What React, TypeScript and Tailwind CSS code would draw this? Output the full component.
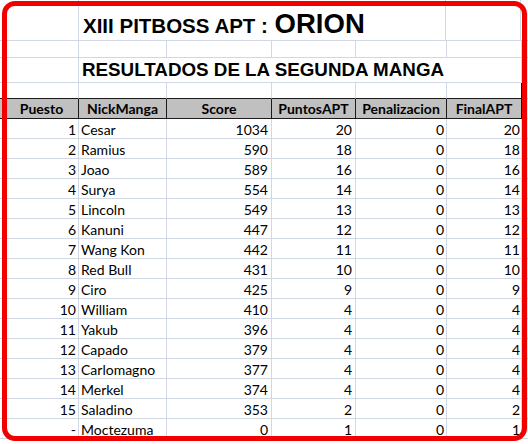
import React from "react";

const rows: [string, string, string, string, string, string][] = [
  ["1", "Cesar", "1034", "20", "0", "20"],
  ["2", "Ramius", "590", "18", "0", "18"],
  ["3", "Joao", "589", "16", "0", "16"],
  ["4", "Surya", "554", "14", "0", "14"],
  ["5", "Lincoln", "549", "13", "0", "13"],
  ["6", "Kanuni", "447", "12", "0", "12"],
  ["7", "Wang Kon", "442", "11", "0", "11"],
  ["8", "Red Bull", "431", "10", "0", "10"],
  ["9", "Ciro", "425", "9", "0", "9"],
  ["10", "William", "410", "4", "0", "4"],
  ["11", "Yakub", "396", "4", "0", "4"],
  ["12", "Capado", "379", "4", "0", "4"],
  ["13", "Carlomagno", "377", "4", "0", "4"],
  ["14", "Merkel", "374", "4", "0", "4"],
  ["15", "Saladino", "353", "2", "0", "2"],
  ["-", "Moctezuma", "0", "1", "0", "1"],
];

const G = "border-[#d0d7e5]";

function BodyRow({ r }: { r: [string, string, string, string, string, string] }) {
  const cell = `h-[20px] shrink-0 border-r border-b ${G} pt-[2px] leading-[17px]`;
  return (
    <div className="flex">
      <div className={`${cell} w-[79px] text-right pr-[2px]`}>{r[0]}</div>
      <div className={`${cell} w-[88px] text-left pl-[2px] whitespace-nowrap`}>{r[1]}</div>
      <div className={`${cell} w-[105px] text-right pr-[3px]`}>{r[2]}</div>
      <div className={`${cell} w-[84px] text-right pr-[3px]`}>{r[3]}</div>
      <div className={`${cell} w-[91px] text-right pr-[2px]`}>{r[4]}</div>
      <div className={`${cell} w-[75px] text-right pr-[1px]`}>{r[5]}</div>
      <div className={`h-[20px] flex-1 border-b ${G}`} />
    </div>
  );
}

export default function App() {
  const hcell =
    "h-[20px] shrink-0 border-r border-b border-[#1a1a1a] bg-[#c0c0c0] pt-[1px] leading-[17px] text-center font-bold";
  return (
    <div className="relative w-[528px] h-[444px] overflow-hidden bg-white text-black text-[14px] font-['Lato',sans-serif]">
      {/* Row 1: title */}
      <div className="flex">
        <div className={`h-[41px] w-[79px] shrink-0 border-r border-b ${G}`} />
        <div
          className={`h-[41px] w-[263px] shrink-0 border-b ${G} pl-[4px] pt-[10px] leading-none text-[27.5px] font-bold font-['Liberation_Sans',Arial,sans-serif] whitespace-nowrap`}
        >
          <span className="text-[20.5px]">XIII PITBOSS APT : </span>
          <span className="ml-[1px]">ORION</span>
        </div>
        <div className={`h-[41px] w-[104px] shrink-0 border-r border-b ${G}`} />
        <div className={`h-[41px] w-[75px] shrink-0 border-r border-b ${G}`} />
        <div className={`h-[41px] flex-1 border-b ${G}`} />
      </div>
      {/* Row 2 */}
      <div className="flex">
        <div className={`h-[17px] w-[79px] shrink-0 border-r border-b ${G}`} />
        <div className={`h-[17px] w-[88px] shrink-0 border-r border-b ${G}`} />
        <div className={`h-[17px] w-[105px] shrink-0 border-r border-b ${G}`} />
        <div className={`h-[17px] w-[84px] shrink-0 border-r border-b ${G}`} />
        <div className={`h-[17px] w-[91px] shrink-0 border-r border-b ${G}`} />
        <div className={`h-[17px] w-[75px] shrink-0 border-r border-b ${G}`} />
        <div className={`h-[17px] flex-1 border-b ${G}`} />
      </div>
      {/* Row 3: subtitle */}
      <div className="flex">
        <div className={`h-[25px] w-[79px] shrink-0 border-r border-b ${G}`} />
        <div
          className={`h-[25px] w-[443px] shrink-0 border-r border-b ${G} pl-[3px] pt-[3px] leading-none text-[18.8px] font-bold font-['Liberation_Sans',Arial,sans-serif] whitespace-nowrap`}
        >
          RESULTADOS DE LA SEGUNDA MANGA
        </div>
        <div className={`h-[25px] flex-1 border-b ${G}`} />
      </div>
      {/* Row 4: blank, dark bottom line */}
      <div className="flex">
        <div className={`h-[16px] w-[79px] shrink-0 border-r ${G} border-b border-b-[#1a1a1a]`} />
        <div className={`h-[16px] w-[88px] shrink-0 border-r ${G} border-b border-b-[#1a1a1a]`} />
        <div className={`h-[16px] w-[105px] shrink-0 border-r ${G} border-b border-b-[#1a1a1a]`} />
        <div className={`h-[16px] w-[84px] shrink-0 border-r ${G} border-b border-b-[#1a1a1a]`} />
        <div className={`h-[16px] w-[91px] shrink-0 border-r ${G} border-b border-b-[#1a1a1a]`} />
        <div className={`h-[16px] w-[75px] shrink-0 border-r border-r-[#1a1a1a] border-b border-b-[#1a1a1a]`} />
        <div className={`h-[16px] flex-1 border-b ${G}`} />
      </div>
      {/* Header */}
      <div className="flex">
        <div className={`${hcell} w-[79px] pl-[5px]`}>Puesto</div>
        <div className={`${hcell} w-[88px]`}>NickManga</div>
        <div className={`${hcell} w-[105px]`}>Score</div>
        <div className={`${hcell} w-[84px]`}>PuntosAPT</div>
        <div className={`${hcell} w-[91px]`}>Penalizacion</div>
        <div className={`${hcell} w-[75px]`}>FinalAPT</div>
        <div className={`h-[20px] flex-1 border-b ${G}`} />
      </div>
      {rows.map((r, i) => (
        <BodyRow key={i} r={r} />
      ))}
      {/* Red rounded frame overlay */}
      <div className="pointer-events-none absolute left-[2px] top-[1px] w-[525px] h-[440px] rounded-[13px] border-[5px] border-[#f10000]" />
    </div>
  );
}
